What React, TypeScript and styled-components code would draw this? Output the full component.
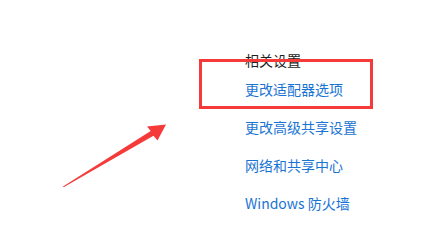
import React from "react";
import styled, { createGlobalStyle } from "styled-components";

const Global = createGlobalStyle`
  html, body { margin: 0; padding: 0; background: #ffffff; }
  body { width: 434px; height: 238px; overflow: hidden; }
`;

const Page = styled.div`
  position: relative;
  width: 434px;
  height: 238px;
  background: #ffffff;
  font-family: "Noto Sans CJK SC", "Noto Sans", sans-serif;
  box-sizing: border-box;
  padding: 50px 0 0 245px;
`;

const Section = styled.div`
  display: flex;
  flex-direction: column;
`;

const Heading = styled.div`
  font-size: 14px;
  line-height: 20px;
  color: #1e1e1e;
  margin-bottom: 9px;
`;

const LinkList = styled.div`
  display: flex;
  flex-direction: column;
  gap: 18px;
`;

const LinkItem = styled.a`
  font-size: 14px;
  line-height: 20px;
  color: #1a74d4;
  text-decoration: none;
  white-space: nowrap;
`;

const Highlight = styled.div`
  position: absolute;
  left: 199px;
  top: 59px;
  width: 174px;
  height: 50px;
  box-sizing: border-box;
  border: 3px solid #f53a3a;
  pointer-events: none;
`;

const Arrow = styled.svg`
  position: absolute;
  left: 0;
  top: 0;
  pointer-events: none;
`;

const links = ["更改适配器选项", "更改高级共享设置", "网络和共享中心", "Windows 防火墙"];

export default function App() {
  return (
    <Page>
      <Global />
      <Section>
        <Heading>相关设置</Heading>
        <LinkList>
          {links.map((l) => (
            <LinkItem key={l} href="#">
              {l}
            </LinkItem>
          ))}
        </LinkList>
      </Section>
      <Highlight />
      <Arrow width="434" height="238" viewBox="0 0 434 238">
        <polygon
          points="63,186.5 150.7,131 147,126.5 166,124.5 157.5,140.5 153.5,135.8 63.6,187.3"
          fill="#f53a3a"
        />
      </Arrow>
    </Page>
  );
}
